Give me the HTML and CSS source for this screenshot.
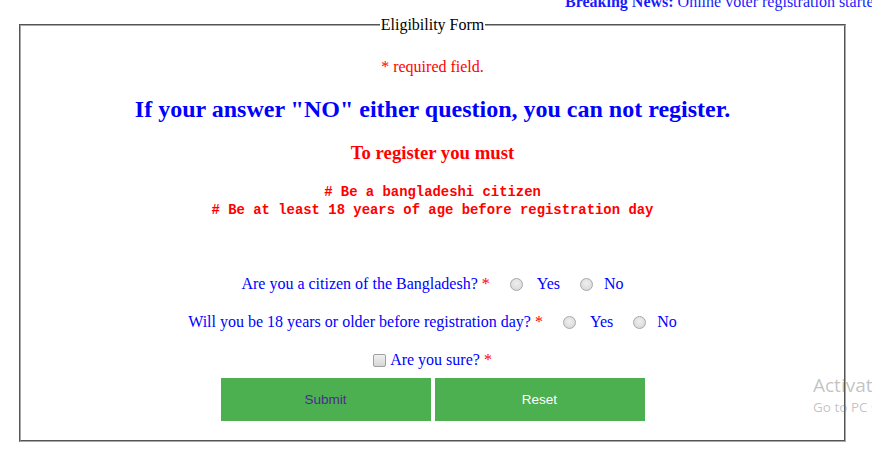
FILE: index.html
```html
<!DOCTYPE html>
<html>
<head>
<meta charset="utf-8">
<link rel="stylesheet" href="styles.css">
</head>
<body>
<div class="news"><b>Breaking News:</b> Online voter registration started from today. Please check your eligibility below.</div>
<fieldset class="form">
  <legend class="legend">Eligibility Form</legend>
  <p class="req">* required field.</p>
  <h2 class="warn">If your answer "NO" either question, you can not register.</h2>
  <h3 class="must">To register you must</h3>
  <div class="rules">
    <div># Be a bangladeshi citizen</div>
    <div># Be at least 18 years of age before registration day</div>
  </div>
  <div class="q q1">
    <span class="qt">Are you a citizen of the Bangladesh? <span class="star">*</span></span>
    <input type="radio" class="radio r1" name="c"><span class="opt">Yes</span>
    <input type="radio" class="radio r2" name="c"><span class="opt">No</span>
  </div>
  <div class="q q2">
    <span class="qt">Will you be 18 years or older before registration day? <span class="star">*</span></span>
    <input type="radio" class="radio r1" name="a"><span class="opt">Yes</span>
    <input type="radio" class="radio r2" name="a"><span class="opt">No</span>
  </div>
  <div class="q sure">
    <input type="checkbox" class="check"><span class="qt">Are you sure? <span class="star">*</span></span>
  </div>
  <div class="buttons">
    <button class="btn submit" type="button">Submit</button>
    <button class="btn reset" type="button">Reset</button>
  </div>
</fieldset>
<div class="activate">
  <div class="act1">Activate Windows</div>
  <div class="act2">Go to PC settings to activate Windows.</div>
</div>
</body>
</html>
```
FILE: styles.css
```css
html, body {
  margin: 0;
  padding: 0;
  overflow: hidden;
  background: #fff;
}
body {
  font-family: "Liberation Serif", "Times New Roman", serif;
  font-size: 16px;
  width: 872px;
  height: 450px;
  position: relative;
}
.news {
  margin-top: -7px;
  height: 18px;
  line-height: 18px;
  white-space: nowrap;
  overflow: hidden;
  color: #1a1aff;
  text-indent: 565px;
}
.form {
  margin: 5px 0 0 19px;
  width: 827px;
  box-sizing: border-box;
  border: 2px groove #a8a8a8;
  padding: 0 12px 19px;
  text-align: center;
}
.legend {
  margin: 0 auto;
  padding: 0 1px;
  line-height: 18px;
  color: #000;
}
.req {
  margin: 24px 0 0;
  line-height: 18px;
  color: #f00;
}
.warn {
  margin: 19px 0 0;
  font-size: 24px;
  line-height: 28px;
  font-weight: bold;
  color: #00f;
}
.must {
  margin: 19px 0 0;
  font-size: 18.72px;
  line-height: 22px;
  font-weight: bold;
  color: #f00;
}
.rules {
  margin-top: 19px;
  font-family: "Liberation Mono", "DejaVu Sans Mono", monospace;
  font-weight: bold;
  font-size: 13.9px;
  line-height: 18px;
  color: #f00;
}
.q {
  display: flex;
  justify-content: center;
  align-items: center;
  height: 22px;
  line-height: 22px;
  color: #00f;
  margin-top: 16px;
}
.q1 { margin-top: 54px; }
.star { color: #f00; }
.radio {
  appearance: none;
  -webkit-appearance: none;
  width: 13px;
  height: 13px;
  margin: 0;
  border: 1px solid #a8a8a8;
  border-radius: 50%;
  background: radial-gradient(circle at 50% 40%, #efefef 0%, #dcdcdc 70%, #cfcfcf 100%);
  box-sizing: border-box;
}
.r1 { margin-left: 20px; margin-right: 14px; }
.r2 { margin-left: 20px; margin-right: 11px; }
.check {
  appearance: none;
  -webkit-appearance: none;
  width: 13px;
  height: 13px;
  margin: 0 4px 0 0;
  border: 1px solid #a0a0a0;
  border-radius: 2px;
  background: linear-gradient(#f0f0f0, #d6d6d6);
  box-sizing: border-box;
}
.buttons {
  margin-top: 7px;
  display: flex;
  justify-content: center;
  gap: 4px;
}
.btn {
  width: 210px;
  height: 43px;
  border: none;
  background: #4caf50;
  font-family: "Liberation Sans", Arial, sans-serif;
  font-size: 13.5px;
  padding: 0;
}
.submit { color: #4e2a93; }
.reset { color: #fff; }
.activate {
  position: absolute;
  left: 813px;
  top: 373px;
  white-space: nowrap;
  font-family: "Open Sans", "Noto Sans", sans-serif;
  color: rgba(120, 120, 120, 0.45);
}
.act1 {
  font-size: 19px;
  line-height: 24px;
}
.act2 {
  font-size: 13.5px;
  line-height: 20px;
}
```
